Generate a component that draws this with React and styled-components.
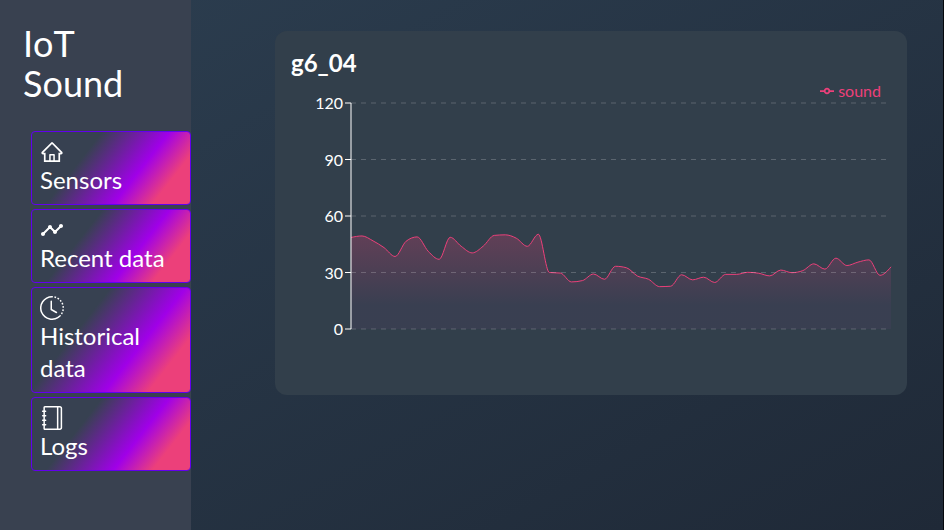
import React, { useLayoutEffect, useRef, useState } from 'react';
import styled, { createGlobalStyle } from 'styled-components';
import { AiOutlineHome } from 'react-icons/ai';
import { MdTimeline } from 'react-icons/md';
import { BsClockHistory } from 'react-icons/bs';
import { SlNotebook } from 'react-icons/sl';

const PINK = '#ec407a';

const GlobalStyle = createGlobalStyle`
  *, *::before, *::after { box-sizing: border-box; }
  body {
    margin: 0;
    font-family: Lato, "Open Sans", sans-serif;
    color: #fff;
    background: #1f2937;
  }
`;

const Page = styled.div`
  display: flex;
  min-height: 100vh;
  background: linear-gradient(to bottom right, #2c3e50, #1f2937);
  border-right: 1px solid #05080c;
`;

const Sidebar = styled.aside`
  flex: 0 0 191px;
  padding-top: 23px;
  background: #394150;
`;

const Brand = styled.h1`
  margin: 0 23px 28px;
  font-size: 36px;
  line-height: 40px;
  font-weight: 400;
  font-kerning: none;
`;

const NavList = styled.ul`
  display: flex;
  flex-direction: column;
  gap: 4px;
  margin: 0;
  padding: 0 0 0 31px;
  list-style: none;
`;

const NavLink = styled.a`
  display: block;
  padding: 8px;
  border: 1px solid #6200ee;
  border-radius: 4px;
  color: #fff;
  font-size: 24px;
  line-height: 32px;
  text-decoration: none;
  background: linear-gradient(128deg, #374151 33%, #a000e8 64%, ${PINK} 82%) border-box;

  svg { display: block; }
`;

const Main = styled.main`
  flex: 1;
  min-width: 0;
  padding: 31px 36px 31px 84px;
`;

const Card = styled.section`
  padding: 16px;
  border-radius: 12px;
  background: #323f4b;
`;

const CardTitle = styled.h2`
  margin: 0;
  font-size: 24px;
  line-height: 32px;
  font-weight: 700;
`;

const Legend = styled.div`
  display: flex;
  justify-content: flex-end;
  align-items: center;
  gap: 4px;
  height: 24px;
  padding-right: 10px;
  color: ${PINK};
  font-size: 16px;
  line-height: 24px;
`;

const Plot = styled.svg`
  display: block;
  width: 100%;
  height: 276px;
  overflow: visible;
`;

const TickLabel = styled.text`
  font-size: 16px;
  fill: #fff;
  text-anchor: end;
`;

const NAV = [
  { label: 'Sensors', Icon: AiOutlineHome },
  { label: 'Recent data', Icon: MdTimeline },
  { label: 'Historical data', Icon: BsClockHistory },
  { label: 'Logs', Icon: SlNotebook },
];

const READINGS = [
  48.6, 49.4, 46.8, 43.2, 38.5, 46.6, 48.9, 41.3, 37, 48.7, 43.9, 40.4, 44, 49.7, 50, 48.2,
  43.9, 50.3, 30, 29.7, 25, 25.7, 29.2, 26.4, 33.3, 32.5, 28.1, 26.4, 22.5, 22.7, 28.8, 26.1,
  27.5, 24.7, 29, 29, 30.1, 29.6, 28.2, 31.3, 29.9, 31, 34.6, 31.8, 37.6, 33.7, 35.5, 36.7,
  28.5, 33,
];

const TICKS = [0, 30, 60, 90, 120];
const AXIS_X = 60;
const PLOT_HEIGHT = 226;
const yFor = (value) => PLOT_HEIGHT * (1 - value / 120);

// Monotone cubic interpolation: no overshoot between samples.
function monotonePath(points) {
  const n = points.length;
  const h = [];
  const s = [];
  for (let i = 0; i < n - 1; i += 1) {
    h.push(points[i + 1][0] - points[i][0]);
    s.push((points[i + 1][1] - points[i][1]) / h[i]);
  }
  const m = points.map((_, i) => {
    if (i === 0 || i === n - 1) return 0;
    const p = (s[i - 1] * h[i] + s[i] * h[i - 1]) / (h[i - 1] + h[i]);
    return (Math.sign(s[i - 1]) + Math.sign(s[i]))
      * Math.min(Math.abs(s[i - 1]), Math.abs(s[i]), 0.5 * Math.abs(p));
  });
  m[0] = (3 * s[0] - m[1]) / 2;
  m[n - 1] = (3 * s[n - 2] - m[n - 2]) / 2;
  let d = `M${points[0][0]},${points[0][1]}`;
  for (let i = 0; i < n - 1; i += 1) {
    const [x0, y0] = points[i];
    const [x1, y1] = points[i + 1];
    const k = h[i] / 3;
    d += `C${x0 + k},${y0 + k * m[i]},${x1 - k},${y1 - k * m[i + 1]},${x1},${y1}`;
  }
  return d;
}

function SoundChart() {
  const ref = useRef(null);
  const [width, setWidth] = useState(600);

  useLayoutEffect(() => {
    const measure = () => setWidth(ref.current.getBoundingClientRect().width);
    measure();
    const observer = new ResizeObserver(measure);
    observer.observe(ref.current);
    return () => observer.disconnect();
  }, []);

  const step = (width - AXIS_X) / (READINGS.length - 1);
  const line = monotonePath(READINGS.map((v, i) => [AXIS_X + i * step, yFor(v)]));

  return (
    <Plot ref={ref} role="img" aria-label="Sound level">
      <defs>
        <linearGradient id="soundFill" x1="0" y1="0" x2="0" y2="1">
          <stop offset="5%" stopColor={PINK} stopOpacity="0.24" />
          <stop offset="75%" stopColor="#503f64" stopOpacity="0.24" />
        </linearGradient>
      </defs>
      <path d={`${line}V${PLOT_HEIGHT}H${AXIS_X}Z`} fill="url(#soundFill)" />
      <path d={line} fill="none" stroke={PINK} />
      {TICKS.map((tick) => (
        <g key={tick}>
          <line
            x1={AXIS_X} x2={width} y1={yFor(tick)} y2={yFor(tick)}
            stroke="#fff" strokeOpacity="0.2" strokeDasharray="5 5"
          />
          <line x1={AXIS_X - 6} x2={AXIS_X} y1={yFor(tick)} y2={yFor(tick)} stroke="#fff" />
          <TickLabel x={AXIS_X - 8} y={yFor(tick)} dy="6">{tick}</TickLabel>
        </g>
      ))}
      <line x1={AXIS_X} x2={AXIS_X} y1="0" y2={PLOT_HEIGHT} stroke="#fff" />
    </Plot>
  );
}

export default function App() {
  return (
    <>
      <GlobalStyle />
      <Page>
        <Sidebar>
          <Brand>IoT Sound</Brand>
          <nav>
            <NavList>
              {NAV.map(({ label, Icon }) => (
                <li key={label}>
                  <NavLink href="#">
                    <Icon size={24} aria-hidden="true" />
                    {label}
                  </NavLink>
                </li>
              ))}
            </NavList>
          </nav>
        </Sidebar>
        <Main>
          <Card>
            <CardTitle>g6_04</CardTitle>
            <Legend>
              <svg width="14" height="14" viewBox="0 0 32 32" aria-hidden="true">
                <path
                  fill="none" stroke={PINK} strokeWidth="4"
                  d="M0,16h10.67A5.33,5.33,0,1,1,21.33,16H32M21.33,16A5.33,5.33,0,1,1,10.67,16"
                />
              </svg>
              sound
            </Legend>
            <SoundChart />
          </Card>
        </Main>
      </Page>
    </>
  );
}
